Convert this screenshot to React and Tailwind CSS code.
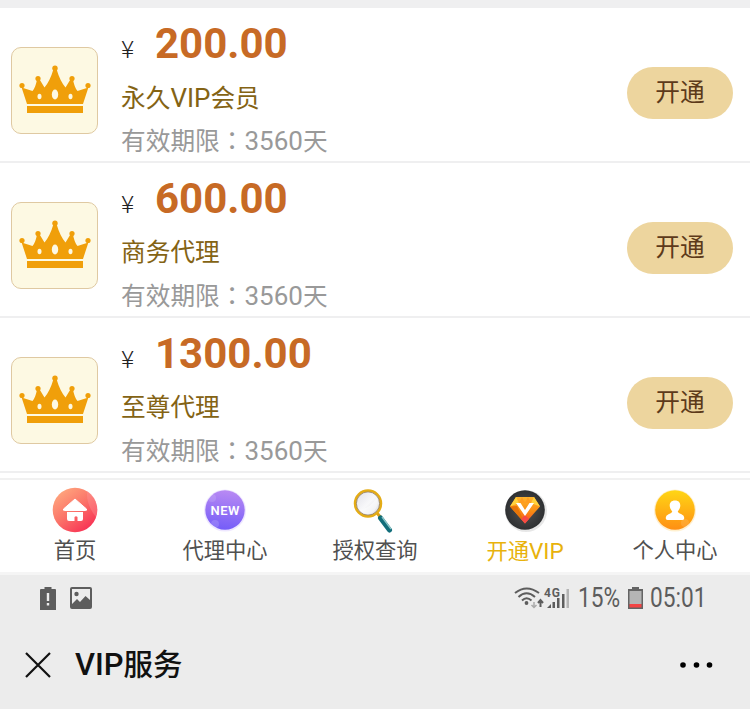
import React from "react";

const plans = [
  { id: 1, price: "200.00", name: ["永久", "VIP", "会员"], days: "3560" },
  { id: 2, price: "600.00", name: ["商务代理"], days: "3560" },
  { id: 3, price: "1300.00", name: ["至尊代理"], days: "3560" },
];

const Crown = () => (
  <svg width="72" height="50" viewBox="0 0 72 50" fill="#f09f0a">
    <path d="M8 39 L2.6 22.5 L13.5 26 Q16.500 23 18.200 13.500 L20 13.500 L25.500 22.500 Q31 16 34.500 4 L37.500 4 Q41 16 46.500 22.500 L52 13.500 L53.800 13.500 Q55.500 23 58.500 26 L69.400 22.500 L64 39 Z" />
    <circle cx="36" cy="3.300" r="2.700" />
    <circle cx="19" cy="13.500" r="2.600" />
    <circle cx="53" cy="13.500" r="2.600" />
    <circle cx="3" cy="20.500" r="2.600" />
    <circle cx="69" cy="20.500" r="2.600" />
    <rect x="8" y="41" width="56" height="7" />
    <g fill="#fdf9e3">
      <ellipse cx="36" cy="29.500" rx="3.200" ry="5" />
      <ellipse cx="20.500" cy="31.500" rx="2" ry="2.800" />
      <ellipse cx="51.500" cy="31.500" rx="2" ry="2.800" />
    </g>
  </svg>
);

const PlanRow = ({ plan }) => (
  <div className="flex h-[155px] items-start border-b-2 border-[#efeff0] pl-[11px] pr-[17px]">
    <div className="mt-[39px] flex h-[87px] w-[87px] shrink-0 items-center justify-center rounded-[10px] border border-[#dfc9a2] bg-[#fdf9e3]">
      <Crown />
    </div>
    <div className="ml-[23px] flex-1 whitespace-nowrap">
      <div className="flex h-[72px] items-baseline leading-[72px]">
        <span className="w-[34px] text-[24.7px] text-[#222]">
          <span className="font-['Noto_Sans_CJK_SC'] font-light">¥</span>
        </span>
        <span className="text-[42px] font-bold text-[#c76a25]">{plan.price}</span>
      </div>
      <div className="flex h-[36px] items-baseline text-[24.7px] leading-[36px] text-[#846314]">
        {plan.name.map((part) => (
          <span key={part} className={part === "VIP" ? "text-[26px]" : ""}>
            {part}
          </span>
        ))}
      </div>
      <div className="flex h-[46px] items-baseline text-[24.7px] leading-[46px] text-[#999]">
        <span>有效期限</span>
        <span className="font-['Noto_Sans_CJK_TC']">：</span>
        <span className="text-[26px]">{plan.days}</span>
        <span>天</span>
      </div>
    </div>
    <button className="mt-[59px] h-[52px] w-[106px] rounded-full bg-[#edd59e] text-[24.7px] leading-[50px] text-[#5d3a1a]">
      开通
    </button>
  </div>
);

const HomeIcon = () => (
  <svg width="48" height="48" viewBox="0 0 48 48">
    <defs>
      <linearGradient id="home" x1="0.1" y1="0.1" x2="0.75" y2="0.95">
        <stop offset="0" stopColor="#ffa77e" />
        <stop offset="0.5" stopColor="#fb7469" />
        <stop offset="1" stopColor="#f83455" />
      </linearGradient>
    </defs>
    <circle cx="24" cy="24" r="22.300" fill="url(#home)" />
    <path d="M36 5 A22 22 0 0 1 45 31 Q35 19 36 5Z" fill="#ff9aa0" opacity="0.35" />
    <path d="M24 13 L35.500 23 Q36 24.500 34.500 24.500 H13.500 Q12 24.500 12.500 23 Z" fill="#fff" stroke="#fff" strokeLinejoin="round" />
    <path d="M16 26 H32 V33 Q32 35 30 35 H26.500 V31 Q25 29.500 23.500 31 V35 H18 Q16 35 16 33 Z" fill="#fff" />
  </svg>
);

const NewIcon = () => (
  <svg width="48" height="48" viewBox="0 0 48 48">
    <defs>
      <linearGradient id="new" x1="0.6" y1="0" x2="0.5" y2="1">
        <stop offset="0" stopColor="#b98af3" />
        <stop offset="1" stopColor="#755df8" />
      </linearGradient>
    </defs>
    <circle cx="24" cy="24.500" r="21" fill="#eee7ff" />
    <circle cx="24" cy="24" r="19.700" fill="url(#new)" />
    <circle cx="11" cy="12" r="4" fill="#fff" opacity="0.13" />
    <circle cx="14" cy="38" r="4" fill="#fff" opacity="0.15" />
    <text x="24" y="28.500" textAnchor="middle" fontFamily="Roboto, sans-serif" fontSize="13" fontWeight="600" fill="#fff" textLength="29">
      NEW
    </text>
  </svg>
);

const SearchIcon = () => (
  <svg width="48" height="48" viewBox="0 0 48 48">
    <defs>
      <linearGradient id="lens" x1="0" y1="0" x2="1" y2="1">
        <stop offset="0" stopColor="#dedee6" />
        <stop offset="0.5" stopColor="#f8f8fa" />
        <stop offset="1" stopColor="#d9dade" />
      </linearGradient>
    </defs>
    <path d="M26 27 L31 33" stroke="#d9a21c" strokeWidth="3" />
    <path d="M29.500 32 L38.500 44" stroke="#126e7b" strokeWidth="5" strokeLinecap="round" />
    <path d="M31 31 L40 43" stroke="#8cc5c7" strokeWidth="1.300" />
    <circle cx="17" cy="17.500" r="13" fill="url(#lens)" stroke="#e4ac16" strokeWidth="2.500" />
    <circle cx="17" cy="17.500" r="11.600" fill="none" stroke="#765b3a" strokeWidth="0.600" />
    <path d="M9 24 Q20 22 26 11 Q29 20 21 27 Q14 30 9 24Z" fill="#fff" opacity="0.45" />
  </svg>
);

const VipIcon = () => (
  <svg width="48" height="48" viewBox="0 0 48 48">
    <defs>
      <linearGradient id="gem" x1="0" y1="0" x2="0" y2="1">
        <stop offset="0" stopColor="#ffb52d" />
        <stop offset="0.55" stopColor="#f98b12" />
        <stop offset="1" stopColor="#fa4b2c" />
      </linearGradient>
      <radialGradient id="disc">
        <stop offset="0" stopColor="#555" />
        <stop offset="1" stopColor="#2e3032" />
      </radialGradient>
    </defs>
    <circle cx="25" cy="25" r="21" fill="#ddd" opacity="0.7" />
    <circle cx="24" cy="24" r="19.800" fill="url(#disc)" />
    <path d="M15 11 H33 L39 20.500 L24 37.500 L9 20.500 Z" fill="url(#gem)" />
    <path d="M15 11 L18 17 L9 20.500 Z M33 11 L30 17 L39 20.500 Z" fill="#ffd23c" />
    <path d="M18 17 L21 11 L24 17 L27 11 L30 17 Z" fill="#ff9c20" />
    <path d="M9 20.500 L24 37.500 L16 20 Z" fill="#e87508" />
    <path d="M24 29 L20 33 L24 37.500 L28 33 Z" fill="#f64a46" />
    <path d="M15 17 H19.500 L24 24 L28.500 17 H33 L24 30 Z" fill="#fff" />
  </svg>
);

const UserIcon = () => (
  <svg width="48" height="48" viewBox="0 0 48 48">
    <defs>
      <linearGradient id="user" x1="0.5" y1="0" x2="0.5" y2="1">
        <stop offset="0" stopColor="#ffd615" />
        <stop offset="1" stopColor="#ff8f13" />
      </linearGradient>
    </defs>
    <circle cx="24" cy="24.500" r="21" fill="#fff0cf" />
    <circle cx="24" cy="24" r="19.800" fill="url(#user)" />
    <circle cx="34" cy="37" r="4" fill="#fff" opacity="0.12" />
    <path d="M24 14.500 C19.800 14.500 18.300 17.500 18.800 20.500 C19.200 23 20.200 24 21.300 25.500 Q21 27 17.500 28.200 Q14.700 29.200 14.700 32 Q14.700 34 16.500 34 H31.500 Q33.300 34 33.300 32 Q33.300 29.200 30.500 28.200 Q27 27 26.700 25.500 C27.800 24 28.800 23 29.200 20.500 C29.700 17.500 28.200 14.500 24 14.500Z" fill="#fff" />
  </svg>
);

const tabs = [
  { label: "首页", icon: HomeIcon },
  { label: "代理中心", icon: NewIcon },
  { label: "授权查询", icon: SearchIcon },
  { label: "开通", latin: "VIP", icon: VipIcon, active: true },
  { label: "个人中心", icon: UserIcon },
];

const TabBar = () => (
  <nav className="mt-[5px] flex h-[95px] border-t-2 border-[#f1f1f1] pt-[6px]">
    {tabs.map(({ label, latin, icon: Icon, active }) => (
      <a key={label} className="flex flex-1 flex-col items-center">
        <Icon />
        <span
          className={`flex h-[34px] items-baseline text-[21.300px] leading-[34px] ${active ? "text-[#e8b20c]" : "text-[#505050]"}`}
        >
          {label}
          {latin && <span className="text-[22.500px]">{latin}</span>}
        </span>
      </a>
    ))}
  </nav>
);

const StatusBar = () => (
  <div className="flex h-[46px] items-center pl-[40px] text-[#5d5d5d]">
    <svg width="16" height="24" viewBox="0 0 16 24">
      <path d="M1 3 H4.500 V1 H11.500 V3 H15 Q16 3 16 4 V24 H0 V4 Q0 3 1 3Z" fill="#5d5d5d" />
      <path d="M6.800 7 H9.200 V15 H6.800Z M6.800 17 H9.200 V19.500 H6.800Z" fill="#ececec" />
    </svg>
    <svg className="ml-[14px]" width="22" height="22" viewBox="0 0 22 22">
      <rect x="1" y="1" width="20" height="20" rx="1" fill="none" stroke="#5d5d5d" strokeWidth="2" />
      <circle cx="6.500" cy="7" r="2.200" fill="#5d5d5d" />
      <path d="M2 17 L7 12 L10 15 L15.500 9 L20 13 V20 H2Z" fill="#5d5d5d" />
    </svg>
    <svg className="ml-[422px]" width="56" height="26" viewBox="0 0 56 26">
      <g fill="none" stroke="#5d5d5d" strokeWidth="2">
        <path d="M1 8 Q12.500 -1 25 8" />
        <path d="M4.500 12 Q12.500 4.500 21 12" />
        <path d="M8 15.500 Q12.500 11 17.500 15.500" />
      </g>
      <circle cx="12.500" cy="18" r="1.900" fill="#5d5d5d" />
      <path d="M20 17 V22 M17.500 20 L20 22.500 L22.500 20" fill="none" stroke="#aaa" strokeWidth="1.500" />
      <path d="M26.500 22 V15 M24 18 L26.500 15 L29 18" fill="none" stroke="#5d5d5d" strokeWidth="2" />
      <text x="30" y="12" fontFamily="Roboto, sans-serif" fontSize="12" fontWeight="700" fill="#5d5d5d" textLength="16">
        4G
      </text>
      <path d="M33 23 L37 19 V23Z M38.500 17 H41 V23 H38.500Z M43 13 H45.500 V23 H43Z M48 9 H50.500 V23 H48Z" fill="#5d5d5d" />
      <path d="M52.500 4 H55 V23 H52.500Z" fill="#b4b4b4" />
    </svg>
    <span className="ml-[8px] w-[50px] origin-left scale-x-[.84] text-[27px]">15%</span>
    <svg width="15" height="22" viewBox="0 0 15 22">
      <path d="M4 0 H11 V2 H15 V22 H0 V2 H4Z" fill="#646464" />
      <path d="M1.500 4 H13.500 V17 H1.500Z" fill="#b5b5b5" />
      <path d="M1.500 17 H13.500 V20.500 H1.500Z" fill="#f34444" />
    </svg>
    <span className="ml-[7px] w-[60px] origin-left scale-x-[.84] text-[27px]">05:01</span>
  </div>
);

const App = () => {
  return (
    <div className="flex h-[709px] w-[750px] flex-col overflow-hidden bg-white font-[Roboto,'Noto_Sans_CJK_SC',sans-serif]">
      <div className="h-[8px] bg-[#efeff0]" />
      {plans.map((plan) => (
        <PlanRow key={plan.id} plan={plan} />
      ))}
      <TabBar />
      <div className="flex-1 border-t-[3px] border-[#f5f5f5] bg-[#ececec]">
        <StatusBar />
        <div className="flex h-[88px] items-center pl-[25px] pr-[36px]">
          <svg width="26" height="26" viewBox="0 0 26 26" stroke="#111" strokeWidth="2.200">
            <path d="M1 1 L25 25 M25 1 L1 25" />
          </svg>
          <h1 className="ml-[24px] flex items-baseline text-[29.500px] font-medium leading-[44px] text-[#111]">
            <span className="text-[31px]">VIP</span>服务
          </h1>
          <svg className="ml-auto" width="34" height="6" viewBox="0 0 34 6">
            <circle cx="3" cy="3" r="2.800" />
            <circle cx="16.500" cy="3" r="2.800" />
            <circle cx="29.500" cy="3" r="2.800" />
          </svg>
        </div>
      </div>
    </div>
  );
};

export default App;
